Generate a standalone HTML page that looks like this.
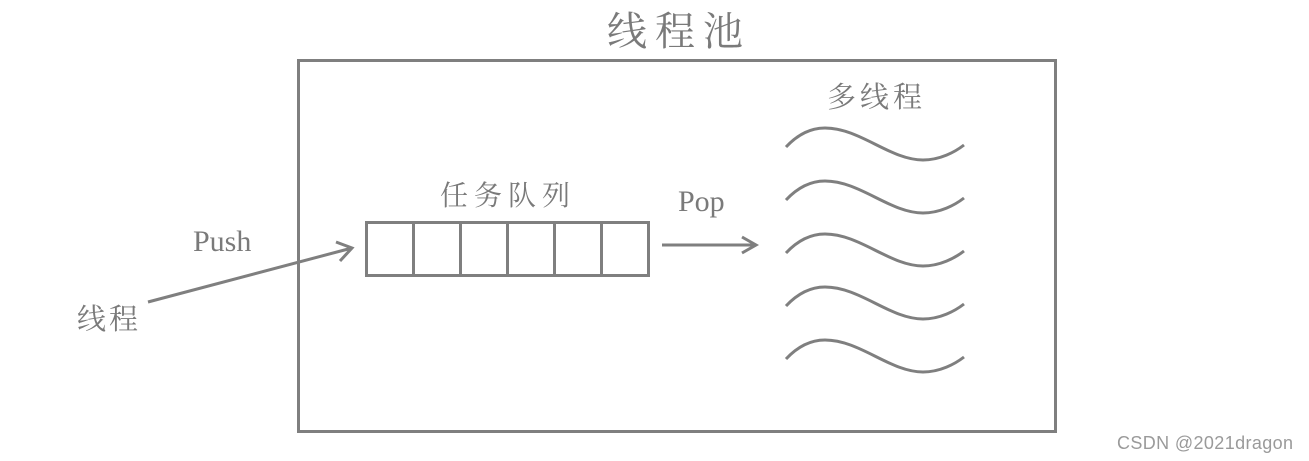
<!DOCTYPE html>
<html><head><meta charset="utf-8"><style>
html,body{margin:0;padding:0;background:#fff;width:1309px;height:461px;overflow:hidden}
svg{display:block}
.t{font-family:"Liberation Serif","Noto Serif CJK SC",serif;fill:#7a7a7a}
</style></head><body>
<svg width="1309" height="461" viewBox="0 0 1309 461" xmlns="http://www.w3.org/2000/svg">
<g fill="none" stroke="#7f7f7f" stroke-width="3">
<rect x="298.5" y="60.5" width="757" height="371"/>
<rect x="366.5" y="222.5" width="282" height="53"/>
<path d="M413.5 222v53M460.5 222v53M507.5 222v53M554.5 222v53M601.5 222v53"/>
<path d="M148 302L352 248M336 242L352 248L340 261"/>
<path d="M662 245H756M742 237L756 245L742 253"/>
<g stroke-width="3">
<path id="w" d="M786,147 C800,132 813,128 825,128 C860,128 890,160 923,160 C940,160 955,152 964,145"/>
<use href="#w" y="53"/><use href="#w" y="106"/><use href="#w" y="159"/><use href="#w" y="212"/>
</g>
</g>
<text class="t" x="607" y="45" font-size="40" letter-spacing="8">线程池</text>
<text class="t" x="827" y="107" font-size="29" letter-spacing="4">多线程</text>
<text class="t" x="440" y="205" font-size="28" letter-spacing="6">任务队列</text>
<text class="t" x="678" y="211" font-size="30">Pop</text>
<text class="t" x="193" y="251" font-size="30">Push</text>
<text class="t" x="77" y="329" font-size="29" letter-spacing="3">线程</text>
<text x="1117" y="449" font-size="18" fill="#9a9a9a" font-family="Liberation Sans,sans-serif" textLength="176">CSDN @2021dragon</text>
</svg>
</body></html>
